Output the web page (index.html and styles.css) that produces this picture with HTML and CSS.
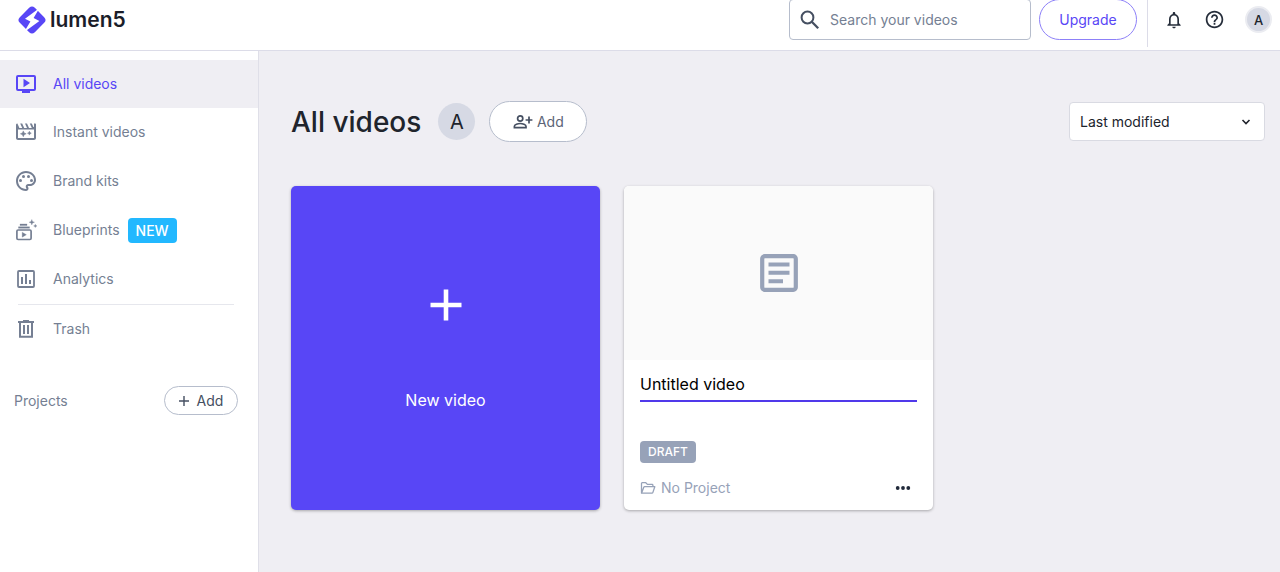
FILE: index.html
```html
<!DOCTYPE html>
<html lang="en">
  <head>
    <meta charset="UTF-8" />
    <meta name="viewport" content="width=device-width, initial-scale=1.0" />
    <title>Lumen5</title>
    <link rel="stylesheet" href="styles.css" />
  </head>
  <body>
    <header class="top-header">
      <a href="#" class="logo">
        <svg width="30" height="30" viewBox="0 0 30 30">
          <rect x="4.4" y="4.4" width="21.2" height="21.2" rx="4" fill="#5846f6" transform="rotate(45 15 15)" />
          <path d="M22.500 3 8 13.800 13.400 16.600 7 27.200 22.400 16 16.600 13Z" fill="#fff" />
        </svg>
        <span>lumen5</span>
      </a>
      <div class="header-right">
        <div class="search">
          <svg width="20" height="20" viewBox="0 0 20 20" fill="none" stroke="#454f61" stroke-width="2">
            <circle cx="7.500" cy="7.500" r="5.900" />
            <path d="M11.800 11.800l6.400 6.400" stroke-width="2.300" />
          </svg>
          <input type="text" name="search" placeholder="Search your videos" aria-label="Search your videos" />
        </div>
        <button type="button" class="upgrade-btn">Upgrade</button>
        <div class="user-menu">
          <button type="button" class="icon-btn" aria-label="Notifications">
            <svg width="20" height="20" viewBox="0 0 24 24" fill="#252d3a">
              <path d="M12 22c1.1 0 2-.9 2-2h-4c0 1.100.9 2 2 2zm6-6v-5c0-3.070-1.630-5.640-4.500-6.320V4c0-.83-.67-1.500-1.500-1.500s-1.500.67-1.500 1.500v.68C7.640 5.360 6 7.920 6 11v5l-2 2v1h16v-1l-2-2zm-2 1H8v-6c0-2.480 1.510-4.500 4-4.500s4 2.020 4 4.500v6z" />
            </svg>
          </button>
          <button type="button" class="icon-btn" aria-label="Help">
            <svg width="21" height="21" viewBox="0 0 24 24" fill="#252d3a">
              <path d="M11 18h2v-2h-2v2zm1-16C6.480 2 2 6.480 2 12s4.480 10 10 10 10-4.480 10-10S17.520 2 12 2zm0 18c-4.410 0-8-3.590-8-8s3.590-8 8-8 8 3.590 8 8-3.590 8-8 8zm0-14c-2.210 0-4 1.790-4 4h2c0-1.100.9-2 2-2s2 .9 2 2c0 2-3 1.750-3 5h2c0-2.250 3-2.500 3-5 0-2.210-1.790-4-4-4z" />
            </svg>
          </button>
          <button type="button" class="avatar avatar-sm">A</button>
        </div>
      </div>
    </header>

    <div class="wrapper">
      <aside class="sidebar">
        <nav>
          <ul class="side-menu">
            <li class="active">
              <a href="#">
                <svg width="24" height="24" viewBox="0 0 24 24">
                  <rect x="3" y="4" width="18" height="14" rx="1" fill="none" stroke="currentColor" stroke-width="2" />
                  <path d="M8 19h8v2H8zM9.500 6.800v8.400l6.500-4.200z" />
                </svg>
                All videos
              </a>
            </li>
            <li>
              <a href="#">
                <svg width="24" height="24" viewBox="0 0 24 24">
                  <path d="M2 5c0-.8.6-1.400 1.400-1.400L5.400 8H8.200L6.200 3.600h2L10.200 8H13l-2-4.400h2L15 8h2.800l-2-4.400h2L19.400 7H20V3.600h1c.6 0 1 .4 1 1V18c0 1.100-.9 2-2 2H4c-1.100 0-2-.9-2-2zM4 9.500V18h16V9.500z" />
                  <path d="M9.300 10.900l.9 2 2 .9-2 .9-.9 2-.9-2-2-.9 2-.9zM15.400 11.300l.6 1.300 1.300.6-1.300.6-.6 1.300-.6-1.300-1.300-.6 1.300-.6z" stroke="currentColor" stroke-width=".5" />
                </svg>
                Instant videos
              </a>
            </li>
            <li>
              <a href="#">
                <svg width="24" height="24" viewBox="0 0 24 24">
                  <path d="M12 22C6.490 22 2 17.510 2 12S6.490 2 12 2s10 4.040 10 9c0 3.310-2.690 6-6 6h-1.770c-.28 0-.5.22-.5.5 0 .12.05.23.13.33.41.47.64 1.060.64 1.670 0 1.380-1.120 2.500-2.500 2.500zm0-18c-4.410 0-8 3.590-8 8s3.590 8 8 8c.28 0 .5-.22.5-.5 0-.16-.08-.28-.14-.35-.41-.46-.63-1.050-.63-1.650 0-1.380 1.120-2.500 2.500-2.500H16c2.210 0 4-1.790 4-4 0-3.860-3.590-7-8-7z" />
                  <circle cx="6.500" cy="11.500" r="1.500" />
                  <circle cx="9.500" cy="7.500" r="1.500" />
                  <circle cx="14.500" cy="7.500" r="1.500" />
                  <circle cx="17.500" cy="11.500" r="1.500" />
                </svg>
                Brand kits
              </a>
            </li>
            <li>
              <a href="#">
                <svg width="24" height="24" viewBox="0 0 24 24">
                  <rect x="2.900" y="12" width="14.200" height="9.500" rx="1.200" fill="none" stroke="currentColor" stroke-width="1.700" />
                  <path d="M4.500 8.800h11v1.500h-11zM6 6h7v1.500H6zM8.200 14.200v5l4.200-2.500zM17.800 1.500l.7 2 2 .7-2 .7-.7 2-.7-2-2-.7 2-.7zM21.300 6.200l.5 1.200 1.200.5-1.200.5-.5 1.200-.5-1.200-1.200-.5 1.200-.5z" stroke="currentColor" stroke-width=".3" />
                </svg>
                Blueprints
                <span class="badge-new">NEW</span>
              </a>
            </li>
            <li>
              <a href="#">
                <svg width="24" height="24" viewBox="0 0 24 24">
                  <rect x="4" y="4" width="16" height="16" rx="1" fill="none" stroke="currentColor" stroke-width="1.800" />
                  <path d="M7 10h2v7H7zM11 7h2v10h-2zM15 13h2v4h-2z" />
                </svg>
                Analytics
              </a>
            </li>
            <li class="trash">
              <a href="#">
                <svg width="24" height="24" viewBox="0 0 24 24">
                  <path d="M4 4h5V3h6v1h5v2H4z" />
                  <path d="M6 5v14.800h12V5" fill="none" stroke="currentColor" stroke-width="2" />
                  <path d="M9 8h2v9H9zM13 8h2v9h-2z" />
                </svg>
                Trash
              </a>
            </li>
          </ul>
        </nav>
        <div class="projects">
          <span>Projects</span>
          <button type="button" class="add-project-btn">
            <svg width="10" height="10" viewBox="0 0 10 10" stroke="#454f61" stroke-width="1.400">
              <path d="M5 0v10M0 5h10" />
            </svg>
            Add
          </button>
        </div>
      </aside>

      <main>
        <div class="title-bar">
          <h1>All videos</h1>
          <span class="avatar">A</span>
          <button type="button" class="add-member-btn">
            <svg width="20" height="16" viewBox="0 0 20 16" fill="none" stroke="#454f61" stroke-width="1.700">
              <circle cx="7.200" cy="4.500" r="2.600" />
              <path d="M1.400 13.700v-1.500c0-1.700 3.500-2.700 5.800-2.700s5.800 1 5.800 2.700v1.500zM16 2.600v6.800M12.600 6h6.800" />
            </svg>
            Add
          </button>
          <div class="sort">
            <select name="sort" aria-label="Sort videos">
              <option>Last modified</option>
              <option>Date created</option>
              <option>Title</option>
            </select>
            <svg width="10" height="6" viewBox="0 0 10 6" fill="none" stroke="#20242c" stroke-width="1.600">
              <path d="M1.500 1l3.500 3.500 3.500-3.500" />
            </svg>
          </div>
        </div>

        <div class="video-list">
          <button type="button" class="card new-card">
            <svg width="32" height="32" viewBox="0 0 32 32" stroke="#fff" stroke-width="4.600">
              <path d="M16 0.500v31M0.500 16h31" />
            </svg>
            <span>New video</span>
          </button>
          <article class="card">
            <div class="thumb">
              <svg width="38" height="38" viewBox="0 0 38 38" fill="#97a2b8">
                <rect x="2.200" y="2.200" width="33.600" height="33.600" rx="2.500" fill="none" stroke="#97a2b8" stroke-width="4.200" />
                <path d="M8.500 8.500h21v4h-21zM8.500 16.800h21v4h-21zM8.500 25.200h14.500v4H8.500z" />
              </svg>
            </div>
            <div class="card-body">
              <input type="text" class="video-title" name="title" value="Untitled video" aria-label="Video title" />
              <span class="status">DRAFT</span>
              <div class="card-footer">
                <svg width="16" height="12" viewBox="0 0 16 12" fill="none" stroke="#97a2b8" stroke-width="1.300" stroke-linejoin="round">
                  <path d="M1.500 10.800V1.500c0-.5.300-.8.800-.8h3.500l1.600 1.700h4.700c.5 0 .8.300.8.800v1.500M1.500 11.200l2.300-5.900c.1-.4.400-.6.800-.6h10.200l-2 5.900c-.1.400-.4.600-.8.600z" />
                </svg>
                <span>No Project</span>
                <button type="button" class="more-btn" aria-label="More">
                  <svg width="16" height="4" viewBox="0 0 16 4" fill="#20293a">
                    <circle cx="2.700" cy="2" r="1.900" />
                    <circle cx="8" cy="2" r="1.900" />
                    <circle cx="13.300" cy="2" r="1.900" />
                  </svg>
                </button>
              </div>
            </div>
          </article>
        </div>
      </main>
    </div>
  </body>
</html>
```
FILE: styles.css
```css
* {
  box-sizing: border-box;
}
body {
  margin: 0;
  min-height: 100vh;
  display: flex;
  flex-direction: column;
  overflow: hidden;
  background-color: #efeef3;
  font-family: Inter, "Liberation Sans", sans-serif;
  font-size: 14px;
  line-height: 20px;
  color: #20242c;
}
a {
  color: inherit;
  text-decoration: none;
}
button,
input,
select {
  font: inherit;
  color: inherit;
}
button {
  padding: 0;
  border: 0;
  background: none;
  cursor: pointer;
}
svg {
  flex: none;
}

/* header */
.top-header {
  display: flex;
  justify-content: space-between;
  align-items: flex-start;
  height: 52px;
  margin-top: -1px;
  padding: 0 8px 0 17px;
  background-color: #fff;
  border-bottom: 1px solid #dcdce8;
}
.logo {
  display: flex;
  align-items: center;
  gap: 3px;
  height: 41px;
  font-size: 21px;
  font-weight: 600;
  color: #1b1d29;
}
.header-right {
  display: flex;
  gap: 8px;
}
.search {
  display: flex;
  align-items: center;
  gap: 10px;
  width: 242px;
  height: 41px;
  padding: 0 10px;
  border: 1px solid #b6bdcc;
  border-radius: 4px;
}
.search input {
  width: 100%;
  padding: 0;
  border: 0;
  outline: 0;
  background: none;
}
.search input::placeholder {
  color: #757f93;
  opacity: 1;
}
.upgrade-btn {
  width: 98px;
  height: 41px;
  border: 1px solid #8d80f8;
  border-radius: 21px;
  color: #5846f6;
}
.user-menu {
  display: flex;
  align-items: center;
  gap: 20px;
  height: 48px;
  margin-left: 2px;
  padding: 0 0 7px 16px;
  border-left: 1px solid #dcdce8;
}
.icon-btn {
  display: flex;
}
.avatar {
  display: flex;
  justify-content: center;
  align-items: center;
  width: 37px;
  height: 37px;
  border-radius: 50%;
  background-color: #d6d9e4;
  font-size: 20px;
}
.avatar-sm {
  width: 27px;
  height: 27px;
  border: 2px solid #ebecf1;
  font-size: 13px;
  font-weight: 500;
}

/* sidebar */
.wrapper {
  display: flex;
  flex: 1;
}
.sidebar {
  flex: none;
  width: 259px;
  padding-top: 9px;
  background-color: #fff;
  border-right: 1px solid #dfdfe8;
}
.side-menu {
  list-style: none;
  margin: 0;
  padding: 0;
  color: #757f93;
}
.side-menu > li {
  margin-bottom: 1px;
}
.side-menu > li > a {
  display: flex;
  align-items: center;
  height: 48px;
  padding-left: 14px;
}
.side-menu > li > a > svg {
  margin-right: 15px;
  fill: currentColor;
}
.side-menu > .active {
  margin-bottom: 0;
  background-color: #efeef3;
  color: #5846f6;
}
.side-menu > .trash {
  margin: 0 24px 0 18px;
  border-top: 1px solid #e6e7ed;
}
.side-menu > .trash > a {
  margin-left: -18px;
}
.badge-new {
  margin-left: 8px;
  padding: 2px 8px;
  border-radius: 4px;
  background-color: #22b8ff;
  color: #fff;
  font-weight: 500;
  line-height: 21px;
}
.projects {
  display: flex;
  justify-content: space-between;
  align-items: center;
  padding: 33px 20px 0 14px;
  color: #757f93;
}
.add-project-btn {
  display: flex;
  justify-content: center;
  align-items: center;
  gap: 8px;
  width: 74px;
  height: 29px;
  border: 1px solid #b6bdcc;
  border-radius: 15px;
  color: #454f61;
}

/* content */
main {
  flex: 1;
  padding: 50px 15px 50px 32px;
}
.title-bar {
  display: flex;
  align-items: center;
  height: 41px;
}
h1 {
  margin: 0 17px 0 0;
  font-size: 28px;
  font-weight: 500;
  line-height: 40px;
}
.add-member-btn {
  display: flex;
  justify-content: center;
  align-items: center;
  gap: 4px;
  width: 98px;
  height: 41px;
  margin-left: 14px;
  border: 1px solid #b6bdcc;
  border-radius: 21px;
  background-color: #fff;
  color: #5c6577;
}
.sort {
  position: relative;
  width: 196px;
  margin-left: auto;
}
.sort select {
  display: block;
  width: 100%;
  height: 39px;
  padding: 0 10px;
  border: 1px solid #d9dae2;
  border-radius: 4px;
  background-color: #fff;
  appearance: none;
}
.sort svg {
  position: absolute;
  right: 14px;
  top: 17px;
  pointer-events: none;
}
.video-list {
  display: grid;
  grid-template-columns: repeat(auto-fill, 309px);
  gap: 24px;
  margin-top: 44px;
}
.card {
  border-radius: 5px;
  overflow: hidden;
  background-color: #fff;
  box-shadow: 0 1px 3px rgba(0, 0, 0, 0.3);
}
.new-card {
  display: flex;
  flex-direction: column;
  align-items: center;
  justify-content: center;
  gap: 69px;
  padding-top: 2px;
  background-color: #5846f6;
  color: #fff;
  font-size: 16px;
}
.thumb {
  display: flex;
  justify-content: center;
  align-items: center;
  height: 174px;
  background-color: #fafafa;
}
.card-body {
  padding: 8px 16px 12px;
}
.video-title {
  display: block;
  width: 100%;
  height: 34px;
  margin-bottom: 39px;
  padding: 0;
  border: 0;
  border-bottom: 2px solid #5039ea;
  outline: 0;
  color: #000;
  font-size: 16px;
}
.status {
  display: inline-block;
  padding: 0 8px;
  border-radius: 4px;
  background-color: #97a2b8;
  color: #fff;
  font-size: 12px;
  font-weight: 500;
  line-height: 22px;
}
.card-footer {
  display: flex;
  align-items: center;
  gap: 5px;
  margin-top: 15px;
  color: #97a2b8;
}
.more-btn {
  display: flex;
  margin-left: auto;
  padding: 6px;
}
```
